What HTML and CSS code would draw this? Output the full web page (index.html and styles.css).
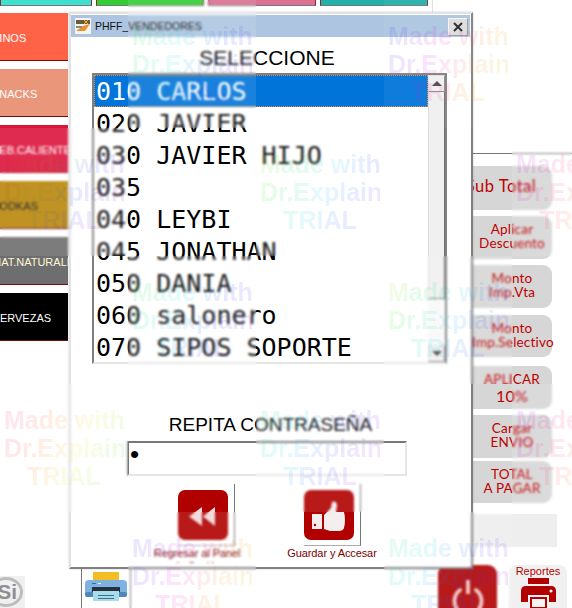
FILE: index.html
```html
<!DOCTYPE html>
<html lang="es">
<head>
<meta charset="utf-8">
<title>PHFF_VENDEDORES</title>
<link rel="stylesheet" href="styles.css">
</head>
<body>
<div class="screen">
  <div class="toprow">
    <div class="topbtn t1"></div>
    <div class="topbtn t2"></div>
    <div class="topbtn t3"></div>
    <div class="topbtn t4"></div>
  </div>
  <div class="main">
    <nav class="sidebar">
      <div class="cat c1">VINOS</div>
      <div class="cat c2">SNACKS</div>
      <div class="cat c3">BEB.CALIENTES</div>
      <div class="cat c4">VODKAS</div>
      <div class="cat c5">MAT.NATURALES</div>
      <div class="cat c6">CERVEZAS</div>
    </nav>
    <aside class="side">
      <div class="rule"></div>
      <div class="act a1 big">Sub Total</div>
      <div class="act a2">Aplicar<br>Descuento</div>
      <div class="act a3">Monto<br>Imp.Vta</div>
      <div class="act a4">Monto<br>Imp.Selectivo</div>
      <div class="act a5">APLICAR<br><span class="pct">10%</span></div>
      <div class="act a6">Cargar<br>ENVIO</div>
      <div class="act a7">TOTAL<br>A PAGAR</div>
      <div class="blank"></div>
    </aside>
  </div>
  <footer class="foot">
    <div class="si"><span class="si-ring">Si</span></div>
    <div class="printbox">
      <svg class="printer" viewBox="0 0 42 30" width="42" height="30">
        <rect x="8" y="0" width="26" height="9" fill="#f2bd25"/>
        <rect x="0" y="8" width="42" height="17" rx="4" fill="#7fb2e0"/>
        <rect x="0" y="20" width="42" height="5" rx="2" fill="#4d86bd"/>
        <rect x="7" y="15" width="28" height="5" fill="#26323e"/>
        <rect x="8" y="19" width="26" height="10" fill="#a9dcea"/>
        <rect x="13" y="23" width="16" height="1" fill="#3c6f8a"/>
        <rect x="13" y="26" width="16" height="1" fill="#3c6f8a"/>
        <rect x="7" y="11" width="4" height="1" fill="#2f6fb0"/>
        <rect x="13" y="11" width="3" height="1" fill="#e6f2fb"/>
      </svg>
    </div>
    <div class="power">
      <svg viewBox="0 0 36 36" width="36" height="36">
        <path d="M10 13 A13.5 13.5 0 1 0 26 13" fill="none" stroke="#eebcbc" stroke-width="4" stroke-linecap="round"/>
        <line x1="18" y1="3" x2="18" y2="17" stroke="#eebcbc" stroke-width="4"/>
      </svg>
    </div>
    <div class="reports">
      <span class="reports-label">Reportes</span>
      <svg viewBox="0 0 35 30" width="35" height="30">
        <rect x="7" y="0" width="21" height="6" fill="#b00000"/>
        <path d="M5 8 H30 Q35 8 35 13 V24 H28 V17 H7 V24 H0 V13 Q0 8 5 8 Z" fill="#b00000"/>
        <circle cx="30" cy="13" r="1.6" fill="#f3f3f3"/>
        <rect x="10" y="20" width="15" height="10" fill="#f3f3f3" stroke="#b00000" stroke-width="2"/>
      </svg>
    </div>
  </footer>

  <section class="dialog">
    <header class="titlebar">
      <svg class="appicon" viewBox="0 0 16 16" width="16" height="16">
        <rect width="16" height="16" fill="#f4f4f4"/>
        <rect x="1" y="2" width="14" height="4" fill="#6b5a3a"/>
        <path d="M1 13 L8 8 L15 6 L10 13 Z" fill="#e8922a"/>
        <rect x="1" y="8" width="6" height="2" fill="#8a8a7a"/>
        <path d="M9 2 L13 6 M13 2 L9 6" stroke="#f0b030" stroke-width="1"/>
      </svg>
      <span class="wintitle">PHFF_VENDEDORES</span>
      <button class="close" type="button">
        <svg viewBox="0 0 10 10" width="10" height="10"><path d="M1 1 L9 9 M9 1 L1 9" stroke="#222" stroke-width="2"/></svg>
      </button>
    </header>
    <h1 class="heading">SELECCIONE</h1>
    <div class="listbox">
      <ul class="items">
        <li class="item selected">010 CARLOS</li>
        <li class="item">020 JAVIER</li>
        <li class="item">030 JAVIER HIJO</li>
        <li class="item">035</li>
        <li class="item">040 LEYBI</li>
        <li class="item">045 JONATHAN</li>
        <li class="item">050 DANIA</li>
        <li class="item">060 salonero</li>
        <li class="item">070 SIPOS SOPORTE</li>
      </ul>
      <div class="scrollbar">
        <div class="sb-btn"><span class="arrow up"></span></div>
        <div class="sb-thumb"></div>
        <div class="sb-track"></div>
        <div class="sb-btn"><span class="arrow down"></span></div>
      </div>
    </div>
    <div class="pwlabel">REPITA CONTRASEÑA</div>
    <div class="pwinput">•</div>
    <div class="actions">
      <div class="action">
        <div class="pic back">
          <div class="tile-icon">
            <svg viewBox="0 0 50 50" width="50" height="50"><path d="M24 17 V36 L11 26.5 Z M37 17 V36 L25 26.5 Z" fill="#f0d8d8"/></svg>
          </div>
        </div>
        <div class="caption">Regresar al Panel de Sesión</div>
      </div>
      <div class="action">
        <div class="pic ok">
          <div class="tile-icon">
            <svg viewBox="0 0 50 50" width="50" height="50">
              <rect x="8" y="24" width="10" height="15" fill="#f4eeee"/>
              <circle cx="11" cy="35" r="1.2" fill="#b00000"/>
              <path d="M20 25 L27 18 L28 12 Q32 10 33 15 L32 22 H40 Q42 30 40 38 Q39 41 35 41 H26 L20 39 Z" fill="#f4eeee"/>
            </svg>
          </div>
        </div>
        <div class="caption">Guardar y Accesar</div>
      </div>
    </div>
  </section>

  <div class="overlay">
    <div></div><div class="tile g1"><p>Made with<br>Dr.Explain<br>TRIAL</p></div><div></div><div class="tile g2 plain"><p>Made with<br>Dr.Explain<br>TRIAL</p></div><div></div>
    <div class="tile g3"><p>Made with<br>Dr.Explain<br>TRIAL</p></div><div></div><div class="tile g4"><p>Made with<br>Dr.Explain<br>TRIAL</p></div><div></div><div class="tile g5"><p>Made with<br>Dr.Explain<br>TRIAL</p></div>
    <div></div><div class="tile g1"><p>Made with<br>Dr.Explain<br>TRIAL</p></div><div></div><div class="tile g4"><p>Made with<br>Dr.Explain<br>TRIAL</p></div><div></div>
    <div class="tile g6"><p>Made with<br>Dr.Explain<br>TRIAL</p></div><div></div><div class="tile g7"><p>Made with<br>Dr.Explain<br>TRIAL</p></div><div></div><div class="tile g5"><p>Made with<br>Dr.Explain<br>TRIAL</p></div>
    <div></div><div class="tile g2"><p>Made with<br>Dr.Explain<br>TRIAL</p></div><div></div><div class="tile g7"><p>Made with<br>Dr.Explain<br>TRIAL</p></div><div></div>
  </div>
</div>
</body>
</html>
```

FILE: styles.css
```css
* { box-sizing: border-box; }
html, body { margin: 0; padding: 0; background: #fff; }
.screen {
  position: relative;
  width: 572px;
  height: 608px;
  overflow: hidden;
  background: #fff;
  font-family: "Liberation Sans", Arial, sans-serif;
  display: flex;
  flex-direction: column;
}

/* top strip */
.toprow { display: flex; gap: 4px; height: 13px; width: 433px; border-right: 1px solid #ddd; align-items: flex-start; }
.topbtn { height: 6px; width: 108px; border: 1px solid #8a2a2a; border-top: 0; border-bottom-color: #777; }
.t1 { width: 92px; background: #40e0d0; }
.t2 { background: #32cd32; }
.t3 { background: #db7093; }
.t4 { background: #20b2aa; }

/* main area */
.main { display: flex; justify-content: space-between; height: 552px; }
.sidebar { width: 68px; display: flex; flex-direction: column; gap: 8px; overflow: hidden; }
.cat {
  height: 48px;
  line-height: 50px;
  font-size: 11px;
  text-indent: -8px;
  white-space: nowrap;
  overflow: hidden;
  color: #fff;
  border-bottom: 1px solid #7a0c0c;
}
.c1 { background: #ff6347; }
.c2 { background: #e9967a; }
.c3 { background: #dc143c; border-bottom-color: #b01030; }
.c4 { background: #b8860b; color: #222; }
.c5 { background: #6e6e6e; color: #fff8d8; }
.c6 { background: #000; }

.side { width: 114px; display: flex; flex-direction: column; align-items: flex-start; }
.rule { width: 114px; height: 1px; margin-top: 140px; background: #777; flex: none; }
.act {
  width: 94px;
  height: 43px;
  border-radius: 9px;
  background: #d6d6d6;
  color: #c00000;
  font-family: Lato, "Open Sans", sans-serif;
  font-size: 13.5px;
  letter-spacing: .2px;
  line-height: 14px;
  text-align: center;
  padding: 6px 0 0 14px;
  flex: none;
}
.act.big { font-size: 16.5px; line-height: 18px; padding: 11px 8px 0 0; letter-spacing: .5px; }
.a1 { height: 44px; margin-top: 12px; }
.a2 { margin-top: 6px; }
.a3 { margin-top: 6px; }
.a4 { margin-top: 7px; height: 42px; }
.a5 { margin-top: 9px; }
.a6 { margin-top: 6px; }
.a7 { margin-top: 3px; height: 42px; }
.pct { font-size: 16px; line-height: 20px; }
.blank { width: 99px; height: 33px; margin-top: 11px; background: #eee; flex: none; }

/* footer */
.foot { height: 43px; display: flex; align-items: flex-start; }
.si { width: 25px; height: 32px; margin-top: 11px; background: #f0f0f0; overflow: hidden; flex: none; position: relative; }
.si-ring {
  display: block;
  width: 34px;
  height: 30px;
  margin: 1px 0 0 -11px;
  border: 3px solid #bdbdbd;
  border-radius: 50%;
  color: #8f8f8f;
  font-weight: 700;
  font-size: 21px;
  line-height: 24px;
  text-align: right;
  padding-right: 3px;
}
.printbox {
  width: 50px;
  height: 43px;
  margin-left: 56px;
  border-left: 1px solid #777;
  border-right: 1px solid #777;
  padding: 7px 0 0 3px;
  flex: none;
}
.printer { display: block; }
.power {
  width: 59px;
  height: 50px;
  margin-left: 307px;
  background: #b00000;
  border-radius: 9px;
  padding: 12px 0 0 12px;
  flex: none;
}
.power svg { display: block; }
.reports {
  width: 58px;
  height: 50px;
  margin-left: 12px;
  background: #f0f0f0;
  border-radius: 8px;
  display: flex;
  flex-direction: column;
  align-items: center;
  flex: none;
}
.reports-label { font-size: 11px; line-height: 13px; color: #b00000; }

/* dialog window */
.dialog {
  position: absolute;
  left: 69px;
  top: 12px;
  width: 404px;
  height: 557px;
  background: #fff;
  border: 2px solid #e2e2e2;
  border-right-color: #808080;
  border-bottom-color: #808080;
  padding: 1px 1px 0 0;
  box-shadow: 0 0 2px rgba(0,0,0,.2);
  display: flex;
  flex-direction: column;
}
.titlebar {
  height: 22px;
  background: #adc5e0;
  display: flex;
  align-items: center;
  padding-left: 4px;
  flex: none;
}
.appicon { display: block; flex: none; }
.wintitle { font-size: 10.5px; color: #111; margin-left: 4px; }
.close {
  margin-left: auto;
  margin-right: 2px;
  margin-top: 2px;
  width: 20px;
  height: 18px;
  padding: 0;
  background: #dcdcdc;
  border: 1px solid #f4f4f4;
  border-right-color: #9a9a9a;
  border-bottom-color: #9a9a9a;
  display: flex;
  align-items: center;
  justify-content: center;
}
.close svg { display: block; }
.heading {
  margin: 0;
  height: 36px;
  font-size: 21px;
  font-weight: 400;
  line-height: 24px;
  padding-top: 9px;
  padding-right: 7px;
  text-align: center;
  color: #000;
  flex: none;
}

.listbox {
  margin-left: 21px;
  width: 355px;
  height: 291px;
  display: flex;
  border: 2px solid #808080;
  border-bottom: 2px solid #e6e6e6;
  flex: none;
}
.items { list-style: none; margin: 0; padding: 0; flex: 1; min-width: 0; }
.item {
  height: 32px;
  line-height: 34px;
  padding-left: 2px;
  font-family: "DejaVu Sans Mono", "Liberation Mono", monospace;
  font-size: 25px;
  color: #000;
  white-space: pre;
}
.selected { background: #0074d9; color: #fff; outline: 1px dotted #f08a20; outline-offset: -1px; }
.scrollbar { width: 17px; display: flex; flex-direction: column; background: #f0f0f0; flex: none; }
.sb-btn {
  height: 17px;
  background: #f0f0f0;
  border: 1px solid #e0e0e0;
  border-right-color: #8a8a8a;
  border-bottom-color: #8a8a8a;
  display: flex;
  align-items: center;
  justify-content: center;
  flex: none;
}
.arrow { width: 0; height: 0; border-left: 5px solid transparent; border-right: 5px solid transparent; }
.arrow.up { border-bottom: 5px solid #444; }
.arrow.down { border-top: 5px solid #444; }
.sb-thumb { height: 207px; background: #f0f0f0; border-right: 1px solid #6e6e6e; border-bottom: 1px solid #8a8a8a; border-left: 1px solid #dcdcdc; flex: none; }
.sb-track { flex: 1; background: repeating-conic-gradient(#f4f4f4 0 25%, #fff 0 50%) 0 0 / 2px 2px; }

.pwlabel {
  margin-top: 48px;
  height: 26px;
  line-height: 26px;
  font-size: 19px;
  text-align: center;
  color: #000;
  flex: none;
}
.pwinput {
  margin: 3px 0 0 56px;
  width: 280px;
  height: 35px;
  border: 2px solid #777;
  border-right: 2px solid #e6e6e6;
  border-bottom: 2px solid #e6e6e6;
  font-size: 26px;
  line-height: 22px;
  padding-left: 1px;
  color: #000;
  flex: none;
}
.actions { display: flex; gap: 35px; margin: 8px 0 0 76px; }
.action { width: 100px; flex: none; }
.pic { height: 62px; border-right: 1px solid #777; border-bottom: 1px solid #aaa; padding-top: 6px; }
.pic.back { width: 57px; margin-left: 31px; }
.pic.ok { width: 57px; margin-left: 22px; }
.tile-icon { width: 50px; height: 50px; background: #b00000; border-radius: 7px; }
.tile-icon svg { display: block; }
.caption {
  margin: 1px 3px 0;
  height: 16px;
  overflow: hidden;
  font-size: 11px;
  line-height: 13px;
  text-align: center;
  color: #7a0000;
  letter-spacing: -.1px;
  white-space: normal;
}

/* Dr.Explain trial watermark tiles */
.overlay {
  position: absolute;
  left: 0;
  top: 0;
  width: 640px;
  height: 640px;
  display: grid;
  grid-template-columns: repeat(5, 128px);
  grid-auto-rows: 128px;
  pointer-events: none;
}
.tile {
  background: rgba(255,255,255,.1);
  -webkit-backdrop-filter: blur(1px);
  backdrop-filter: blur(1px);
}
.tile.plain {
  background: rgba(255,255,255,.06);
  -webkit-backdrop-filter: none;
  backdrop-filter: none;
}
.tile p {
  margin: 22px 0 0 4px;
  width: 120px;
  font-weight: 700;
  font-size: 25px;
  line-height: 28px;
  text-align: center;
  white-space: nowrap;
  color: transparent;
  -webkit-background-clip: text;
  background-clip: text;
  opacity: .11;
}
.g1 p { background-image: linear-gradient(115deg, #00e000, #00e0e0 35%, #2040ff 65%, #c000e0); }
.g2 p { background-image: linear-gradient(115deg, #1030ff, #f000f0 40%, #ff9000 70%, #90e000); }
.g3 p { background-image: linear-gradient(115deg, #e00000, #90a000 30%, #2040ff 60%, #f000c0); }
.g4 p { background-image: linear-gradient(115deg, #b0e000, #00e040 25%, #00d0f0 50%, #3040ff 75%, #c000e0); }
.g5 p { background-image: linear-gradient(115deg, #a000f0, #ff2080 35%, #ff9000 65%, #b0e000); }
.g6 p { background-image: linear-gradient(115deg, #ff00a0, #ff5000 30%, #e8e000 60%, #00e060); }
.g7 p { background-image: linear-gradient(115deg, #00e060, #00d0f0 30%, #3040ff 60%, #f000d0); }
```
